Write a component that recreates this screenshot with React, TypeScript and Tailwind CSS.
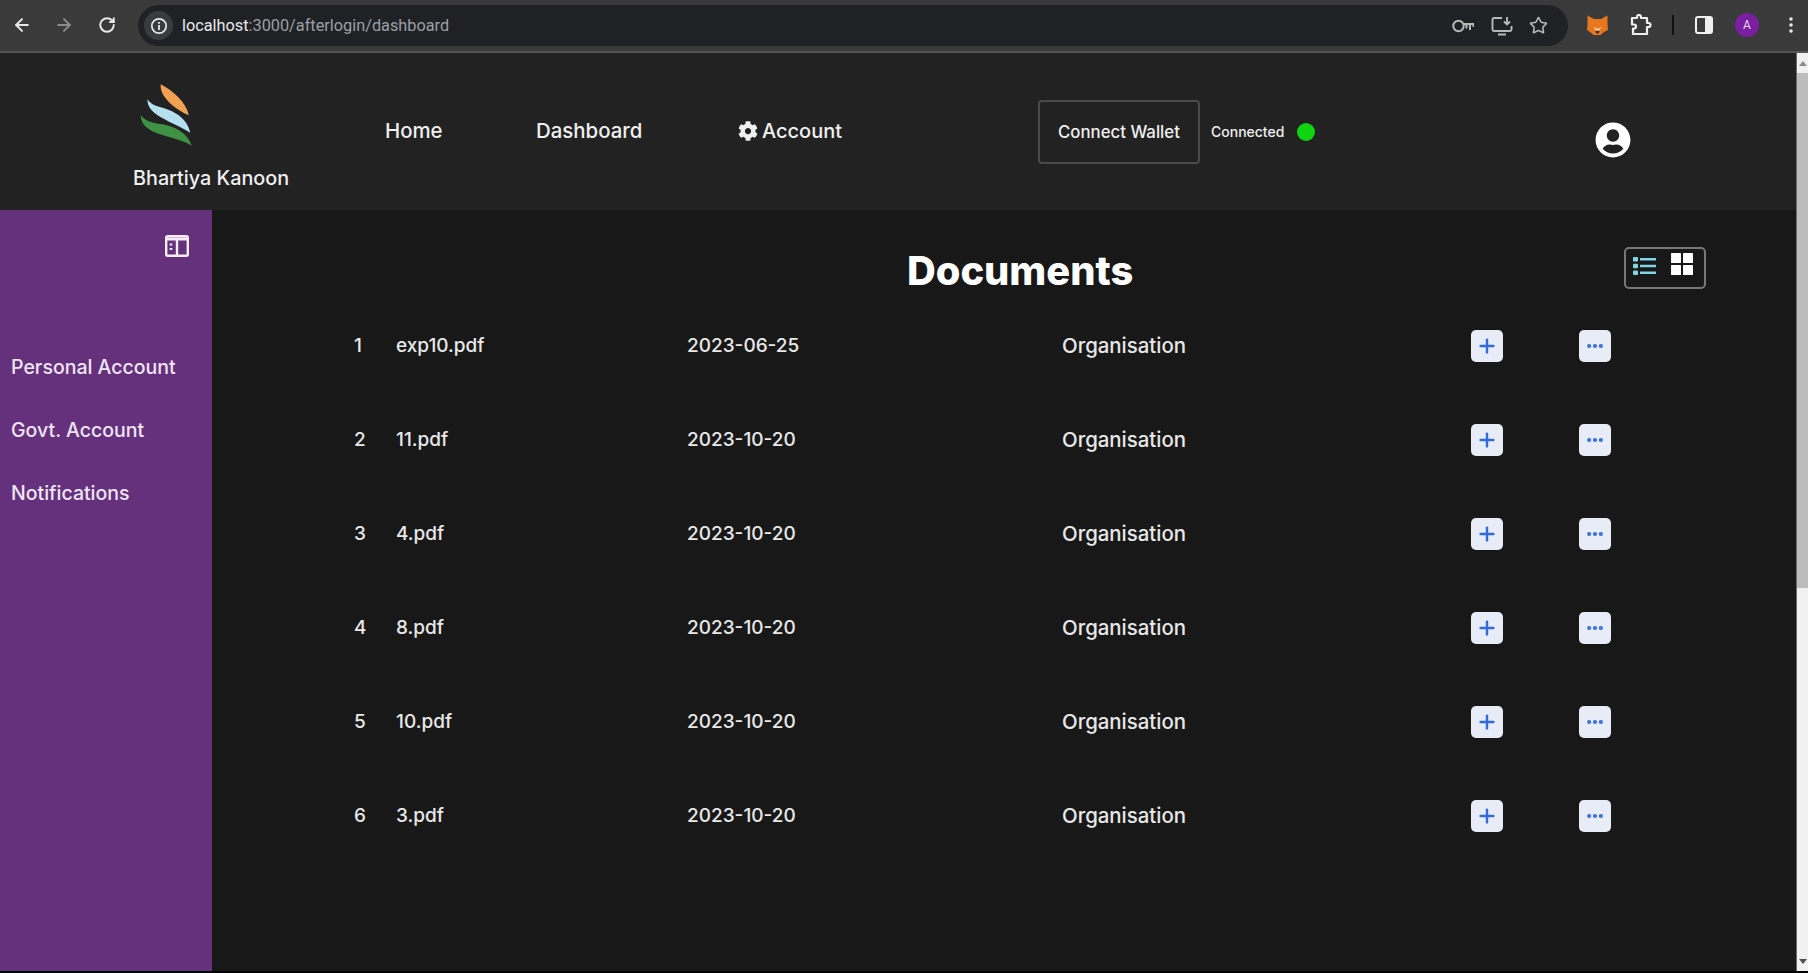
import { ArrowLeft, ArrowRight, RotateCw, Star, Plus, Ellipsis } from "lucide-react";
import { FaCog, FaUserCircle } from "react-icons/fa";

const documents = [
  { id: 1, name: "exp10.pdf", date: "2023-06-25" },
  { id: 2, name: "11.pdf", date: "2023-10-20" },
  { id: 3, name: "4.pdf", date: "2023-10-20" },
  { id: 4, name: "8.pdf", date: "2023-10-20" },
  { id: 5, name: "10.pdf", date: "2023-10-20" },
  { id: 6, name: "3.pdf", date: "2023-10-20" },
];

const sideLinks = ["Personal Account", "Govt. Account", "Notifications"];

function BrowserBar() {
  return (
    <div className="flex h-[53px] shrink-0 items-start border-b-2 border-[#555555] bg-[#3a3a3a]">
      <div className="flex h-[50px] w-[138px] shrink-0 items-center pl-[12px] text-[#e8e8e8]">
        <ArrowLeft size={20} strokeWidth={2.4} />
        <ArrowRight size={20} strokeWidth={2.4} className="ml-[22px] text-[#8a8a8a]" />
        <RotateCw size={18} strokeWidth={2.6} className="ml-[24px]" />
      </div>
      <div className="mt-[5px] flex h-[41px] w-[1430px] shrink-0 items-center rounded-full bg-[#202125] pl-[6px] pr-[20px]">
        <div className="flex h-[29px] w-[29px] items-center justify-center rounded-full bg-[#3a3b3e]">
          <svg width="18" height="18" viewBox="0 0 18 18" fill="none">
            <circle cx="9" cy="9" r="7.2" stroke="#e8e8e8" strokeWidth="1.7" />
            <rect x="8.1" y="8" width="1.8" height="5" fill="#e8e8e8" />
            <rect x="8.1" y="5" width="1.8" height="1.8" fill="#e8e8e8" />
          </svg>
        </div>
        <span className="ml-[9px] pt-[1px] font-[Roboto,sans-serif] text-[16.3px] text-[#9aa0a6]">
          <span className="text-[#e8eaed]">localhost</span>:3000/afterlogin/dashboard
        </span>
        <div className="ml-auto flex items-center text-[#b8b8b8]">
          <svg width="22" height="14" viewBox="0 0 22 14" fill="none" stroke="currentColor" strokeWidth="2">
            <circle cx="6.5" cy="7" r="5.2" />
            <path d="M11.5 5H21.5V8M18 5V11M14.5 5V9.5" />
          </svg>
          <svg width="22" height="20" viewBox="0 0 22 20" fill="none" stroke="currentColor" strokeWidth="1.9" className="ml-[17px]">
            <path d="M11 2H3a1.5 1.5 0 0 0-1.5 1.5v10A1.5 1.5 0 0 0 3 15h16a1.5 1.5 0 0 0 1.5-1.5V10" />
            <path d="M7 18.5h8M16 1v7M13 5.5l3 3 3-3" />
          </svg>
          <Star size={19} strokeWidth={2} className="ml-[16px]" />
        </div>
      </div>
      <div className="flex h-[50px] flex-1 items-center">
        <svg width="21" height="20" viewBox="0 0 21 20" className="ml-[19px]">
          <path d="M0.5 0.5L7 4h7l6.5-3.5L20.5 9l0.5 6-4 2-3.5 3h-7L3 17l-3-2 0.5-6z" fill="#e8761d" />
          <path d="M6 12l3 3.5h3l3-3.5-4.5 1.5z" fill="#f6c9a0" />
          <path d="M8.5 16h4l-1 2.5h-2z" fill="#33241a" />
        </svg>
        <svg width="22" height="22" viewBox="0 0 22 22" fill="none" stroke="#f0f0f0" strokeWidth="2.2" className="ml-[22px]">
          <path d="M2 4h5V3a2 2 0 0 1 4 0v1h6v5h1.5a2 2 0 0 1 0 4H17v7H3v-5.5h1a2 2 0 0 0 0-4H2z" strokeLinejoin="round" />
        </svg>
        <div className="ml-[20px] h-[20px] w-[2px] bg-[#111111]" />
        <svg width="18" height="18" viewBox="0 0 18 18" className="ml-[21px]">
          <rect x="1" y="1" width="16" height="16" rx="2" fill="none" stroke="#f0f0f0" strokeWidth="2" />
          <rect x="10" y="1" width="7" height="16" fill="#f0f0f0" />
        </svg>
        <div className="ml-[22px] flex h-[24px] w-[24px] items-center justify-center rounded-full bg-[#7b1fa2] font-[Roboto,sans-serif] text-[12px] text-[#e8d5f0]">
          A
        </div>
        <svg width="4" height="16" viewBox="0 0 4 16" fill="#e8e8e8" className="ml-[30px]">
          <circle cx="2" cy="2" r="1.8" />
          <circle cx="2" cy="8" r="1.8" />
          <circle cx="2" cy="14" r="1.8" />
        </svg>
      </div>
    </div>
  );
}

function Logo() {
  return (
    <svg width="57" height="65" viewBox="115 35 170 195" className="ml-[5px]">
      <path d="M183 42C178 70 210 110 267 135C258 95 220 62 183 42Z" fill="#f2a152" />
      <path d="M143 87C140 135 215 152 271 187C264 145 222 120 180 110C160 105 150 98 143 87Z" fill="#b4e0f0" />
      <path d="M123 135C122 195 215 192 276 226C262 185 222 165 175 160C150 157 135 150 123 135Z" fill="#3f9143" />
    </svg>
  );
}

function Navbar() {
  return (
    <nav className="flex h-[157px] items-start bg-[#222222] pl-[133px] font-[Inter,sans-serif] font-medium text-[#f0f0f0]">
      <div className="flex w-[252px] shrink-0 flex-col items-start pt-[29px]">
        <Logo />
        <span className="mt-[19px] whitespace-nowrap text-[19.8px] leading-[24px]">Bhartiya Kanoon</span>
      </div>
      <a className="mt-[66px] w-[151px] shrink-0 text-[20.4px] leading-[24px]">Home</a>
      <a className="mt-[66px] w-[202px] shrink-0 text-[20.4px] leading-[24px]">Dashboard</a>
      <a className="mt-[66px] flex w-[300px] shrink-0 items-center gap-[4px] text-[20px] leading-[24px]">
        <FaCog size={20} />
        Account
      </a>
      <button className="mt-[47px] h-[64px] w-[162px] shrink-0 rounded-[4px] border-2 border-[#4a4a4a] pt-[1px] text-[16.8px]">
        Connect Wallet
      </button>
      <span className="ml-[11px] mt-[67px] w-[73px] shrink-0 text-[14px] leading-[24px]">Connected</span>
      <span className="ml-[13px] mt-[70px] h-[18px] w-[18px] shrink-0 rounded-full bg-[#0fd40f]" />
      <FaUserCircle size={36} className="ml-[280px] mt-[69px] shrink-0 text-white" />
    </nav>
  );
}

function Sidebar() {
  return (
    <aside className="flex w-[212px] shrink-0 flex-col bg-[#65317d] font-[Inter,sans-serif] font-medium text-[#f0e6f3]">
      <div className="flex justify-end pr-[23px] pt-[25px]">
        <svg width="24" height="22" viewBox="0 0 24 22" fill="none" stroke="#f5eef7" strokeWidth="2.4">
          <rect x="1.2" y="1.2" width="21.6" height="19.6" rx="1.5" />
          <path d="M1 4h22" strokeWidth="3" />
          <path d="M12 4v17" />
          <path d="M6 8.5v2M6 13v2" strokeWidth="2.6" />
        </svg>
      </div>
      <ul className="mt-[98px] flex flex-col gap-[39px] pl-[11px]">
        {sideLinks.map((link) => (
          <li key={link} className="whitespace-nowrap text-[19.5px] leading-[24px]">
            {link}
          </li>
        ))}
      </ul>
    </aside>
  );
}

function RowButton({ children }: { children: React.ReactNode }) {
  return (
    <button className="flex h-[32px] w-[32px] items-center justify-center rounded-[5px] bg-[#e8ecf6] text-[#2f6bdc]">
      {children}
    </button>
  );
}

function Documents() {
  return (
    <main className="min-w-0 flex-1 bg-[#181818] font-[Inter,sans-serif] font-medium text-[#e8e8e8]">
      <div className="flex h-[89px] items-start pt-[37px]">
        <h1 className="ml-[695px] pt-[1px] text-[39.8px] font-extrabold leading-[46px] text-white">Documents</h1>
        <div className="ml-auto mr-[90px] flex h-[42px] w-[82px] items-start gap-[15px] rounded-[5px] border-2 border-[#777777] pl-[7px] pt-[4px]">
          <svg width="23" height="18" viewBox="0 0 23 18" fill="#7fd6e4" className="mt-[4px]">
            <rect x="0" y="0" width="5" height="4.5" rx="1" />
            <rect x="0" y="6.75" width="5" height="4.5" rx="1" />
            <rect x="0" y="13.5" width="5" height="4.5" rx="1" />
            <rect x="7" y="1" width="16" height="2.5" />
            <rect x="7" y="7.75" width="16" height="2.5" />
            <rect x="7" y="14.5" width="16" height="2.5" />
          </svg>
          <svg width="22" height="22" viewBox="0 0 22 22" fill="#ffffff">
            <rect x="0" y="0" width="10" height="10" rx="0.5" />
            <rect x="12" y="0" width="10" height="10" rx="0.5" />
            <rect x="0" y="12" width="10" height="10" rx="0.5" />
            <rect x="12" y="12" width="10" height="10" rx="0.5" />
          </svg>
        </div>
      </div>
      <div className="grid grid-cols-[42px_291px_375px_409px_108px_32px] pl-[142px]">
        {documents.map((doc) => (
          <div key={doc.id} className="col-span-6 grid h-[94px] grid-cols-subgrid items-center text-[19px]">
            <span className="pt-[1px]">{doc.id}</span>
            <span className="pt-[1px]">{doc.name}</span>
            <span className="pt-[1px]">{doc.date}</span>
            <span className="text-[20.4px]">Organisation</span>
            <RowButton>
              <Plus size={22} strokeWidth={2.6} />
            </RowButton>
            <RowButton>
              <Ellipsis size={20} strokeWidth={3} />
            </RowButton>
          </div>
        ))}
      </div>
    </main>
  );
}

function Scrollbar() {
  return (
    <div className="flex w-[12px] shrink-0 flex-col items-stretch border-l border-[#6b6b6b] bg-[#f1f1f1]">
      <div className="flex h-[20px] items-center justify-center">
        <div className="h-0 w-0 border-x-[4px] border-b-[5px] border-x-transparent border-b-[#8a8a8a]" />
      </div>
      <div className="h-[515px] bg-[#bcbcbc]" />
      <div className="mt-auto flex h-[20px] items-center justify-center">
        <div className="h-0 w-0 border-x-[4px] border-t-[5px] border-x-transparent border-t-[#505050]" />
      </div>
    </div>
  );
}

export default function App() {
  return (
    <div className="flex h-[973px] w-[1808px] flex-col overflow-hidden bg-black">
      <BrowserBar />
      <div className="flex h-[918px] shrink-0">
        <div className="flex min-w-0 flex-1 flex-col">
          <Navbar />
          <div className="flex flex-1">
            <Sidebar />
            <Documents />
          </div>
        </div>
        <Scrollbar />
      </div>
    </div>
  );
}
